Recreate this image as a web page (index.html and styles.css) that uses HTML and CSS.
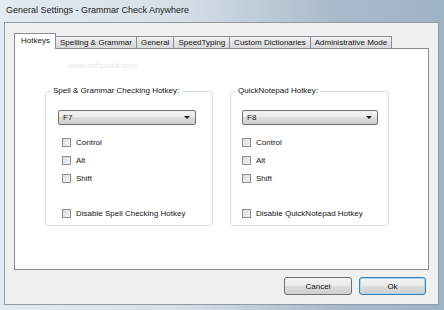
FILE: index.html
```html
<!DOCTYPE html>
<html lang="en">

<head>
    <meta charset="UTF-8">
    <title>General Settings - Grammar Check Anywhere</title>
    <link rel="stylesheet" href="styles.css">
</head>

<body>

    <div class="window">
        <div class="titlebar">General Settings - Grammar Check Anywhere</div>

        <div class="client">
            <div class="tabs">
                <div class="tab active">Hotkeys</div>
                <div class="tab">Spelling &amp; Grammar</div>
                <div class="tab">General</div>
                <div class="tab">SpeedTyping</div>
                <div class="tab">Custom Dictionaries</div>
                <div class="tab">Administrative Mode</div>
            </div>

            <div class="panel">
                <div class="watermark">www.softpedia.com</div>

                <div class="groups">
                    <fieldset class="group group-left">
                        <legend>Spell &amp; Grammar Checking Hotkey:</legend>
                        <div class="combo"><span>F7</span><span class="arrow"></span></div>
                        <div class="check"><span class="box"></span>Control</div>
                        <div class="check"><span class="box"></span>Alt</div>
                        <div class="check"><span class="box"></span>Shift</div>
                        <div class="check disable"><span class="box"></span>Disable Spell Checking Hotkey</div>
                    </fieldset>

                    <fieldset class="group group-right">
                        <legend>QuickNotepad Hotkey:</legend>
                        <div class="combo"><span>F8</span><span class="arrow"></span></div>
                        <div class="check"><span class="box"></span>Control</div>
                        <div class="check"><span class="box"></span>Alt</div>
                        <div class="check"><span class="box"></span>Shift</div>
                        <div class="check disable"><span class="box"></span>Disable QuickNotepad Hotkey</div>
                    </fieldset>
                </div>
            </div>

            <div class="buttons">
                <button class="btn">Cancel</button>
                <button class="btn default">Ok</button>
            </div>
        </div>
    </div>

</body>

</html>
```

FILE: styles.css
```css
body {
    margin: 0;
    font-family: "Liberation Sans", Arial, sans-serif;
    font-size: 8px;
    color: #141414;
    background-color: #a9c8ea;
}

.window {
    width: 444px;
    height: 310px;
    box-sizing: border-box;
    padding: 0 5px 5px 4px;
    background: linear-gradient(to right, #e4eaf1 0%, #d6dfe8 40%, #a9bacb 75%, #9fb3c6 100%);
    overflow: hidden;
}

.titlebar {
    height: 22px;
    line-height: 20px;
    padding-left: 2px;
    font-size: 9px;
    color: #1a1a1a;
}

.client {
    height: 283px;
    box-sizing: border-box;
    border: 1px solid #8d9aa8;
    background-color: #f0f0f0;
    padding: 10px 0 0 9px;
}

.tabs {
    display: flex;
    align-items: flex-end;
    height: 15px;
    position: relative;
    z-index: 1;
}

.tab {
    height: 12px;
    line-height: 12px;
    box-sizing: border-box;
    padding: 0 4px;
    margin-right: -1px;
    border: 1px solid #898c95;
    border-bottom: none;
    background: linear-gradient(to bottom, #f3f3f3, #e3e3e3 50%, #d9d9d9);
    white-space: nowrap;
}

.tab.active {
    height: 16px;
    line-height: 14px;
    padding: 0 5px 0 6px;
    margin-bottom: -1px;
    background: #fff;
}

.panel {
    width: 415px;
    height: 222px;
    box-sizing: border-box;
    border: 1px solid #898c95;
    background-color: #fff;
    padding: 12px 0 0 30px;
}

.watermark {
    height: 14px;
    padding-left: 23px;
    color: #e8e8e8;
    font-size: 8px;
}

.groups {
    display: flex;
    gap: 17px;
    margin-top: 11px;
}

.group {
    margin: 0;
    padding: 0;
    height: 140px;
    box-sizing: border-box;
    border: 1px solid #d5dfe5;
    border-radius: 3px;
}

.group-left {
    width: 168px;
}

.group-right {
    width: 159px;
}

legend {
    margin-left: 5px;
    padding: 0 2px;
    line-height: 10px;
}

.combo {
    display: flex;
    justify-content: space-between;
    align-items: center;
    width: 138px;
    height: 15px;
    box-sizing: border-box;
    margin: 14px 0 0 12px;
    padding: 0 5px 0 4px;
    border: 1px solid #707070;
    border-radius: 2px;
    background: linear-gradient(to bottom, #f2f2f2, #ebebeb 50%, #dddddd 50%, #cfcfcf);
}

.group-right .combo {
    width: 136px;
    margin-left: 11px;
}

.arrow {
    width: 0;
    height: 0;
    border-left: 3px solid transparent;
    border-right: 3px solid transparent;
    border-top: 3px solid #1e1e1e;
}

.check {
    display: flex;
    align-items: center;
    height: 18px;
    margin-left: 16px;
}

.combo + .check {
    margin-top: 8px;
}

.group-right .check {
    margin-left: 11px;
}

.check.disable {
    margin-top: 17px;
}

.box {
    width: 9px;
    height: 9px;
    box-sizing: border-box;
    margin-right: 5px;
    border: 1px solid #8e8f8f;
    background: linear-gradient(135deg, #dcdcdc, #f4f4f4);
}

.buttons {
    display: flex;
    justify-content: flex-end;
    gap: 7px;
    padding: 7px 12px 0 0;
}

.btn {
    width: 68px;
    height: 18px;
    padding: 0;
    font-family: "Liberation Sans", Arial, sans-serif;
    font-size: 8px;
    color: #141414;
    border: 1px solid #707070;
    border-radius: 3px;
    background: linear-gradient(to bottom, #f2f2f2, #ebebeb 50%, #dddddd 50%, #cfcfcf);
}

.btn.default {
    width: 67px;
    border-color: #3c7fb1;
    box-shadow: inset 0 0 0 1px #a6d8f5;
}
```
